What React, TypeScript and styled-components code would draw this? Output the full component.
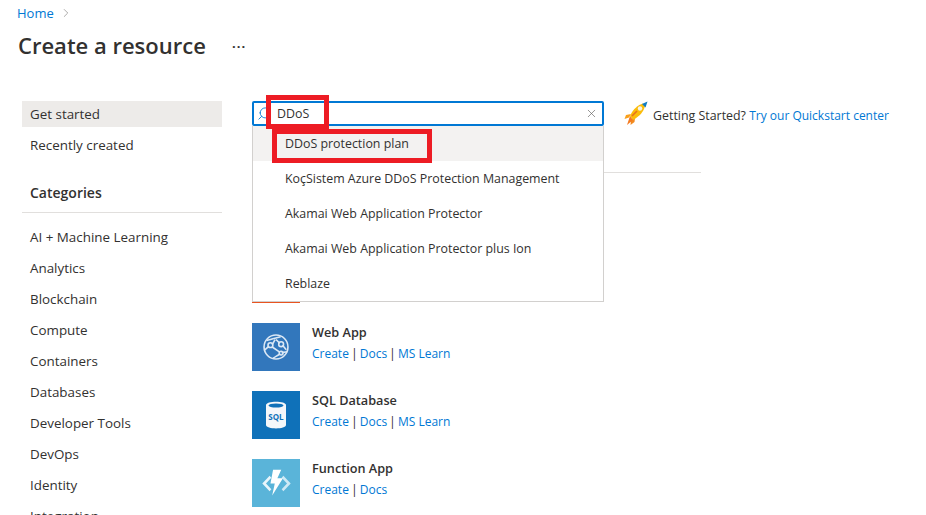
import React from "react";
import styled, { createGlobalStyle } from "styled-components";
import { Search, X, ChevronRight } from "lucide-react";

const GlobalStyle = createGlobalStyle`
  html, body {
    margin: 0;
    padding: 0;
    height: 515px;
    overflow: hidden;
    background: #fff;
  }
  * { box-sizing: border-box; }
`;

const Page = styled.div`
  width: 926px;
  height: 515px;
  overflow: hidden;
  font-family: "Open Sans", "Noto Sans", sans-serif;
  font-size: 12.4px;
  color: #323130;
`;

const Breadcrumb = styled.div`
  display: flex;
  align-items: center;
  gap: 5px;
  height: 26px;
  padding-left: 17px;
  font-size: 13px;
  color: #0078d4;
  svg { color: #8a8886; }
`;

const TitleRow = styled.div`
  display: flex;
  align-items: center;
  height: 38px;
  padding-left: 18px;
`;

const Title = styled.h1`
  margin: 0;
  width: 214px;
  font-size: 22px;
  font-weight: 600;
  line-height: 38px;
`;

const More = styled.span`
  font-size: 13px;
  font-weight: 700;
  letter-spacing: 1px;
  margin-top: -4px;
`;

const Body = styled.div`
  display: flex;
  padding: 37px 0 0 22px;
`;

const Sidebar = styled.aside`
  width: 200px;
  flex: none;
  margin-right: 30px;
`;

const NavItem = styled.div<{ $active?: boolean }>`
  display: flex;
  align-items: center;
  height: ${(p) => (p.$active ? "26px" : "31px")};
  padding-left: 8px;
  padding-bottom: ${(p) => (p.$active ? "0" : "2px")};
  margin-bottom: ${(p) => (p.$active ? "3px" : "0")};
  font-size: 13.4px;
  background: ${(p) => (p.$active ? "#edebe9" : "transparent")};
`;

const CategoriesHeading = styled.div`
  display: flex;
  align-items: center;
  height: 37px;
  margin-top: 15px;
  margin-bottom: 9px;
  padding: 0 0 3px 8px;
  font-size: 14px;
  font-weight: 600;
  border-bottom: 1px solid #e1dfdd;
`;

const Main = styled.main`
  flex: none;
  width: 449px;
`;

const TopRow = styled.div`
  display: flex;
  align-items: center;
  width: 660px;
`;

const SearchWrap = styled.div`
  position: relative;
  width: 352px;
  flex: none;
`;

const SearchBox = styled.div`
  display: flex;
  align-items: center;
  height: 25px;
  padding: 0 4px 0 3px;
  border: 2px solid #0078d4;
  border-radius: 2px;
  svg { flex: none; }
`;

const SearchIcon = styled(Search)`
  color: #0078d4;
  transform: scaleX(-1);
`;

const SearchValue = styled.span`
  flex: 1;
  margin-left: 5px;
`;

const ClearIcon = styled(X)`
  color: #605e5c;
`;

const Dropdown = styled.div`
  position: absolute;
  z-index: 2;
  top: 25px;
  left: 0;
  width: 352px;
  background: #fff;
  border: 1px solid #d2d0ce;
  border-top: none;
`;

const Option = styled.div<{ $active?: boolean }>`
  position: relative;
  display: flex;
  align-items: center;
  height: 35px;
  padding-left: 32px;
  padding-bottom: 1px;
  background: ${(p) => (p.$active ? "#f3f2f1" : "#fff")};
`;

const Highlight = styled.div<{ $left: number; $top: number; $w: number; $h: number }>`
  position: absolute;
  z-index: 3;
  left: ${(p) => p.$left}px;
  top: ${(p) => p.$top}px;
  width: ${(p) => p.$w}px;
  height: ${(p) => p.$h}px;
  border: 5px solid #ed1c24;
`;

const Quickstart = styled.div`
  display: flex;
  align-items: center;
  margin-left: 20px;
  white-space: nowrap;
  svg { margin-right: 5px; flex: none; }
`;

const QuickstartText = styled.span`
  margin-top: 3px;
`;

const Link = styled.span`
  color: #0078d4;
  font-size: 12px;
`;

const Divider = styled.div`
  height: 47px;
  border-bottom: 1px solid #e1dfdd;
`;

const TileList = styled.div`
  display: flex;
  flex-direction: column;
  gap: 20px;
  padding-top: 14px;
`;

const Tile = styled.div`
  display: flex;
  height: 48px;
`;

const TileIcon = styled.div<{ $bg: string }>`
  display: flex;
  align-items: center;
  justify-content: center;
  width: 48px;
  height: 48px;
  flex: none;
  margin-right: 12px;
  background: ${(p) => p.$bg};
`;

const TileBody = styled.div`
  display: flex;
  flex-direction: column;
`;

const TileName = styled.div`
  height: 21px;
  line-height: 19px;
  font-size: 12.7px;
  font-weight: 600;
`;

const TileLinks = styled.div`
  display: flex;
  gap: 2px;
  height: 20px;
  line-height: 20px;
`;

const RocketIcon = () => (
  <svg width="24" height="25" viewBox="0 0 24 25">
    <path d="M7 13 L2 14 L0.5 18 L5 16.5 Z" fill="#f9a01b" />
    <path d="M11 17 L10.5 21 L6.5 24 L7 19 Z" fill="#f28a1e" />
    <path d="M6 15 C9 8 14 4 19 2.5 L21 5 C20 10 16 15 9 19 Z" fill="#fbbc09" />
    <path d="M6 15 L9 19 L3 24 Z" fill="#f47a20" />
    <path d="M8 15 L13 10" stroke="#e8701e" strokeWidth="1.6" />
    <path d="M18 3 L23.5 0.5 L21.5 6.5 Z" fill="#0f7cc4" />
    <circle cx="16" cy="7.5" r="2.2" fill="#f4f4ee" />
  </svg>
);

const GlobeIcon = () => (
  <svg width="28" height="28" viewBox="0 0 30 30" fill="none" stroke="#dbe8f5" strokeWidth="1.7">
    <circle cx="15" cy="15" r="12.8" />
    <path d="M5 8 C10 7 16 5 20 4" />
    <path d="M3 18 L7.5 14 M11 12.5 L14 7 M11 15 L19 20.5 M19 11 L15 7 M22 13 L26 18 M21 21 L27 20 M12 27 C15 25 17 24 19 22.5" />
    <circle cx="9" cy="13" r="2.6" />
    <circle cx="20.5" cy="12" r="2.6" />
    <circle cx="20.5" cy="21.5" r="2" />
  </svg>
);

const SqlIcon = () => (
  <svg width="22" height="28" viewBox="0 0 22 28">
    <path d="M1 4 C1 -0.5 21 -0.5 21 4 L21 24 C21 28.5 1 28.5 1 24 Z" fill="#f4f7fa" />
    <ellipse cx="11" cy="4.5" rx="7.5" ry="2" fill="#0f71b9" />
    <text x="11" y="18.5" textAnchor="middle" fontFamily="Open Sans, sans-serif" fontWeight="700" fontSize="8" fill="#0f71b9">
      SQL
    </text>
  </svg>
);

const FunctionIcon = () => (
  <svg width="31" height="31" viewBox="0 0 36 36">
    <path d="M10 9 L1.5 18 L10 27 L12 24.8 L5.8 18 L12 11.2 Z" fill="#e8f5fb" />
    <path d="M26 9 L34.5 18 L26 27 L24 24.8 L30.2 18 L24 11.2 Z" fill="#cfe9f5" />
    <path d="M14 2 L23.5 2 L19 12 L25.5 12 L13 32 L16 18 L11 18 Z" fill="#fff" />
  </svg>
);

const categories = [
  "AI + Machine Learning",
  "Analytics",
  "Blockchain",
  "Compute",
  "Containers",
  "Databases",
  "Developer Tools",
  "DevOps",
  "Identity",
  "Integration",
];

const options = [
  "DDoS protection plan",
  "KoçSistem Azure DDoS Protection Management",
  "Akamai Web Application Protector",
  "Akamai Web Application Protector plus Ion",
  "Reblaze",
];

// the first two tiles sit behind the open dropdown, only the orange edge shows
const tiles = [
  { id: "hidden-1", name: "", bg: "#0078d4", links: [] as string[], icon: null },
  { id: "hidden-2", name: "", bg: "#e95420", links: [] as string[], icon: null },
  { id: "web", name: "Web App", bg: "#3277bc", links: ["Create", "Docs", "MS Learn"], icon: <GlobeIcon /> },
  { id: "sql", name: "SQL Database", bg: "#0f71b9", links: ["Create", "Docs", "MS Learn"], icon: <SqlIcon /> },
  { id: "func", name: "Function App", bg: "#5ab4d9", links: ["Create", "Docs"], icon: <FunctionIcon /> },
];

const App = () => {
  return (
    <Page>
      <GlobalStyle />
      <Breadcrumb>
        Home
        <ChevronRight size={14} strokeWidth={1.2} />
      </Breadcrumb>
      <TitleRow>
        <Title>Create a resource</Title>
        <More>...</More>
      </TitleRow>
      <Body>
        <Sidebar>
          <NavItem $active>Get started</NavItem>
          <NavItem>Recently created</NavItem>
          <CategoriesHeading>Categories</CategoriesHeading>
          {categories.map((c) => (
            <NavItem key={c}>{c}</NavItem>
          ))}
        </Sidebar>
        <Main>
          <TopRow>
            <SearchWrap>
              <SearchBox>
                <SearchIcon size={15} strokeWidth={1.4} />
                <SearchValue>DDoS</SearchValue>
                <ClearIcon size={13} strokeWidth={1.2} />
              </SearchBox>
              <Highlight $left={14} $top={-6} $w={63} $h={34} />
              <Dropdown>
                {options.map((o, i) => (
                  <Option key={o} $active={i === 0}>
                    {o}
                    {i === 0 && <Highlight $left={19} $top={3} $w={160} $h={34} />}
                  </Option>
                ))}
              </Dropdown>
            </SearchWrap>
            <Quickstart>
              <RocketIcon />
              <QuickstartText>
                Getting Started? <Link>Try our Quickstart center</Link>
              </QuickstartText>
            </Quickstart>
          </TopRow>
          <Divider />
          <TileList>
            {tiles.map((t) => (
              <Tile key={t.id}>
                <TileIcon $bg={t.bg}>{t.icon}</TileIcon>
                <TileBody>
                  <TileName>{t.name}</TileName>
                  <TileLinks>
                    {t.links.map((l, i) => (
                      <React.Fragment key={l}>
                        {i > 0 && <span>|</span>}
                        <Link>{l}</Link>
                      </React.Fragment>
                    ))}
                  </TileLinks>
                </TileBody>
              </Tile>
            ))}
          </TileList>
        </Main>
      </Body>
    </Page>
  );
};

export default App;
